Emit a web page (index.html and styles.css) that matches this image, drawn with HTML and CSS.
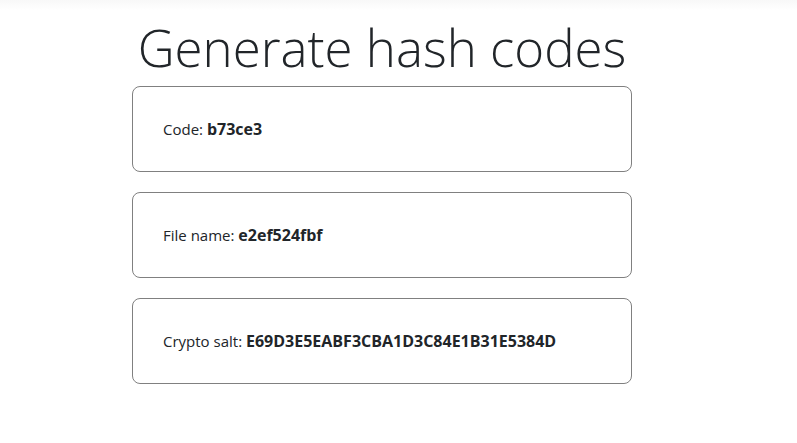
FILE: index.html
```html
<!DOCTYPE html>
<html lang="en">
<head>
<meta charset="utf-8">
<meta name="viewport" content="width=device-width, initial-scale=1">
<title>Generate hash codes</title>
<link rel="stylesheet" href="styles.css">
</head>
<body>
<main class="page">
  <h1 class="title">Generate hash codes</h1>
  <section class="cards">
    <p class="card">Code: <strong>b73ce3</strong></p>
    <p class="card">File name: <strong>e2ef524fbf</strong></p>
    <p class="card">Crypto salt: <strong>E69D3E5EABF3CBA1D3C84E1B31E5384D</strong></p>
  </section>
</main>
</body>
</html>
```
FILE: styles.css
```css
* {
  box-sizing: border-box;
}

body {
  margin: 0;
  padding-right: 33px;
  background: linear-gradient(#f8f8f8, #ffffff 10px) no-repeat #ffffff;
  color: #212529;
  font-family: "Segoe UI", "Open Sans", sans-serif;
  font-size: 15px;
  line-height: 24px;
}

.page {
  max-width: 500px;
  margin: 0 auto;
  padding-top: 12px;
}

.title {
  margin: 0 0 4px;
  font-size: 51px;
  font-weight: 300;
  line-height: 70px;
  text-align: center;
}

.cards {
  display: grid;
  gap: 20px;
}

.card {
  margin: 0;
  padding: 30px;
  border: 1px solid #808080;
  border-radius: 8px;
}

.card strong {
  font-size: 16px;
  font-weight: 700;
  line-height: 1;
}
```
